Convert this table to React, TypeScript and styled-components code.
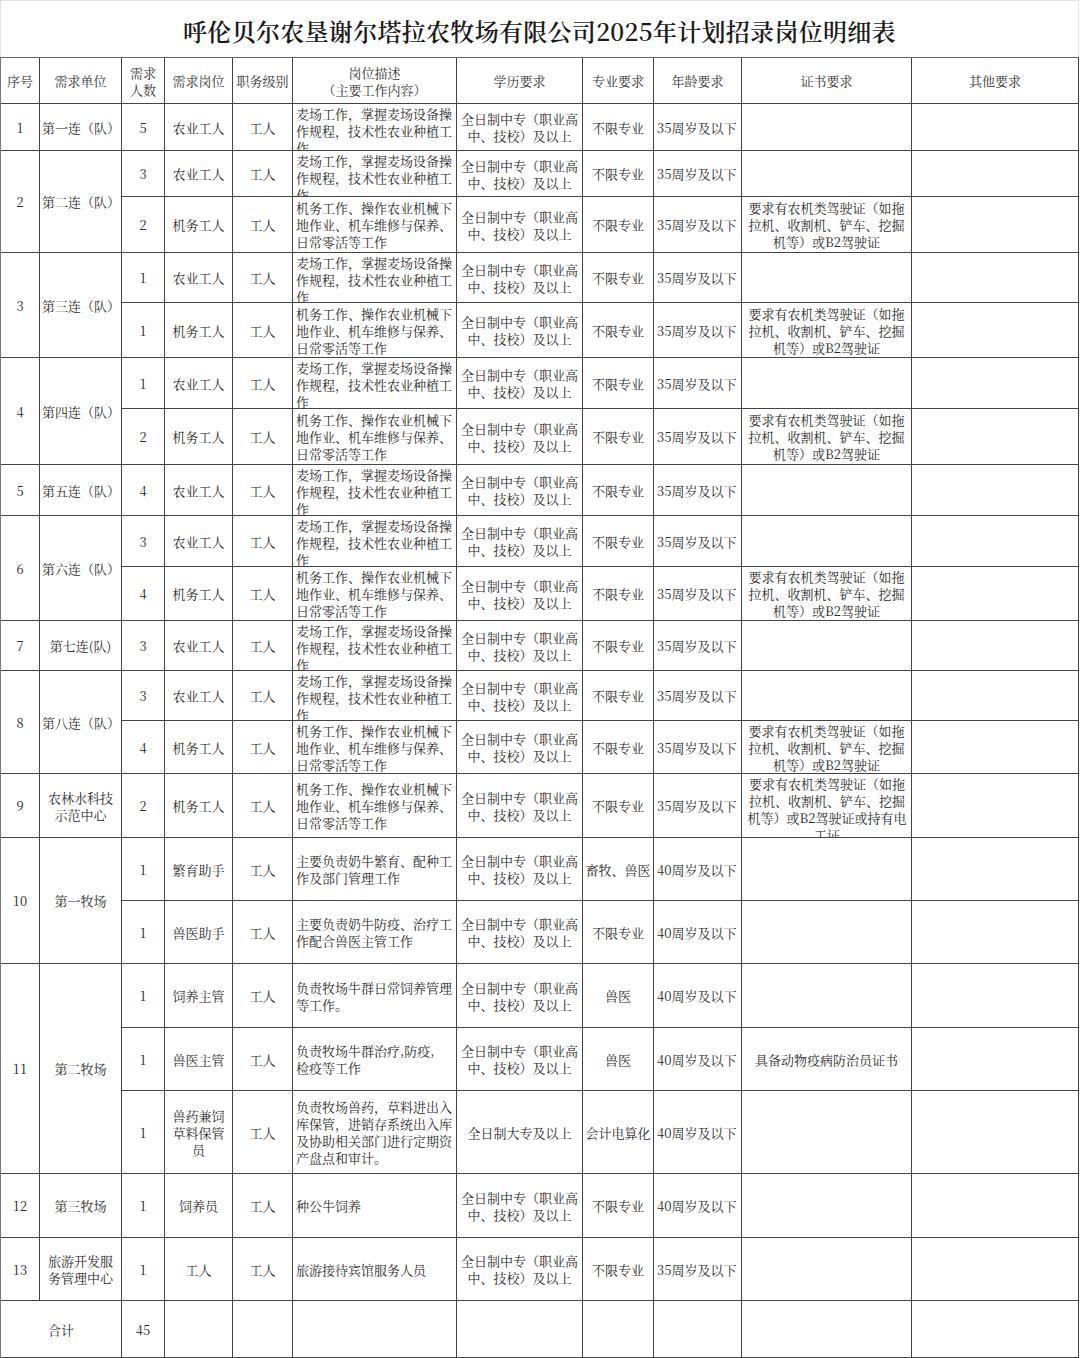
import React from 'react';
import styled, { createGlobalStyle } from 'styled-components';

const Global = createGlobalStyle`
  html, body { margin: 0; padding: 0; background: #fff; }
  body { font-family: "Noto Serif CJK SC", "Liberation Serif", "Noto Sans CJK SC", serif; }
`;

const Page = styled.div`
  width: 1080px;
  background: #fff;
  color: #222;
`;

const Title = styled.div`
  height: 57px;
  box-sizing: border-box;
  width: 1079px;
  border: 1px solid #e2e2e2;
  border-bottom: none;
  display: flex;
  align-items: center;
  justify-content: center;
  font-family: "Noto Serif CJK SC", "Liberation Serif", "Noto Sans CJK SC", serif;
  font-size: 24px;
  font-weight: 600;
  color: #1a1a1a;
  letter-spacing: 0.3px;
  padding-top: 2px;
`;

const Table = styled.div<{ $rows: string }>`
  display: grid;
  grid-template-columns: 39px 82px 43px 68px 60px 164px 126px 71px 88px 170px 167px;
  grid-template-rows: ${(p) => p.$rows};
  border-left: 1px solid #777;
  border-top: 1px solid #666;
  width: 1079px;
  box-sizing: border-box;
`;

const Cell = styled.div<{ $left?: boolean; $top?: boolean; $rowSpan?: number; $colSpan?: number }>`
  box-sizing: border-box;
  display: flex;
  flex-direction: column;
  justify-content: ${(p) => (p.$top ? 'flex-start' : 'center')};
  text-align: ${(p) => (p.$left ? 'left' : 'center')};
  padding: ${(p) => (p.$top ? '1px 2px 0 3px' : '0 2px')};
  ${(p) => (p.$left ? 'padding-left: 3px;' : '')}
  border-right: 1px solid #444;
  border-bottom: 1px solid #444;
  overflow: hidden;
  white-space: pre-line;
  font-size: 13px;
  line-height: 17px;
  color: #2a2a2a;
  grid-row: ${(p) => (p.$rowSpan ? `span ${p.$rowSpan}` : 'auto')};
  grid-column: ${(p) => (p.$colSpan ? `span ${p.$colSpan}` : 'auto')};
`;

const HeadCell = styled(Cell)`
  color: #333;
`;

type Post = {
  n: number;
  post: string;
  desc: string;
  edu?: string;
  major?: string;
  age: string;
  cert?: string;
  h: number;
  descTop?: boolean;
  certTop?: boolean;
};

type Unit = { no: string; unit: string; posts: Post[] };

const FARM_DESC = '麦场工作，掌握麦场设备操\n作规程，技术性农业种植工\n作';
const MECH_DESC = '机务工作、操作农业机械下\n地作业、机车维修与保养、\n日常零活等工作';
const EDU = '全日制中专（职业高\n中、技校）及以上';
const MECH_CERT = '要求有农机类驾驶证（如拖\n拉机、收割机、铲车、挖掘\n机等）或B2驾驶证';

const farm = (n: number, h: number): Post => ({
  n,
  post: '农业工人',
  desc: FARM_DESC,
  major: '不限专业',
  age: '35周岁及以下',
  h,
  descTop: true,
});
const mech = (n: number, h: number): Post => ({
  n,
  post: '机务工人',
  desc: MECH_DESC,
  major: '不限专业',
  age: '35周岁及以下',
  cert: MECH_CERT,
  h,
});

const units: Unit[] = [
  { no: '1', unit: '第一连（队）', posts: [farm(5, 47)] },
  { no: '2', unit: '第二连（队）', posts: [farm(3, 46), mech(2, 56)] },
  { no: '3', unit: '第三连（队）', posts: [farm(1, 50), mech(1, 55)] },
  { no: '4', unit: '第四连（队）', posts: [farm(1, 51), mech(2, 56)] },
  { no: '5', unit: '第五连（队）', posts: [farm(4, 51)] },
  { no: '6', unit: '第六连（队）', posts: [farm(3, 51), mech(4, 54)] },
  { no: '7', unit: '第七连(队)', posts: [farm(3, 50)] },
  { no: '8', unit: '第八连（队）', posts: [farm(3, 50), mech(4, 53)] },
  {
    no: '9',
    unit: '农林水科技\n示范中心',
    posts: [
      {
        ...mech(2, 64),
        cert: '要求有农机类驾驶证（如拖\n拉机、收割机、铲车、挖掘\n机等）或B2驾驶证或持有电\n工证',
        certTop: true,
      },
    ],
  },
  {
    no: '10',
    unit: '第一牧场',
    posts: [
      { n: 1, post: '繁育助手', desc: '主要负责奶牛繁育、配种工\n作及部门管理工作', major: '畜牧、兽医', age: '40周岁及以下', h: 63 },
      { n: 1, post: '兽医助手', desc: '主要负责奶牛防疫、治疗工\n作配合兽医主管工作', major: '不限专业', age: '40周岁及以下', h: 63 },
    ],
  },
  {
    no: '11',
    unit: '第二牧场',
    posts: [
      { n: 1, post: '饲养主管', desc: '负责牧场牛群日常饲养管理\n等工作。', major: '兽医', age: '40周岁及以下', h: 64 },
      {
        n: 1,
        post: '兽医主管',
        desc: '负责牧场牛群治疗,防疫,\n检疫等工作',
        major: '兽医',
        age: '40周岁及以下',
        cert: '具备动物疫病防治员证书',
        h: 63,
      },
      {
        n: 1,
        post: '兽药兼饲\n草料保管\n员',
        desc: '负责牧场兽药，草料进出入\n库保管，进销存系统出入库\n及协助相关部门进行定期资\n产盘点和审计。',
        edu: '全日制大专及以上',
        major: '会计电算化',
        age: '40周岁及以下',
        h: 83,
      },
    ],
  },
  {
    no: '12',
    unit: '第三牧场',
    posts: [{ n: 1, post: '饲养员', desc: '种公牛饲养', major: '不限专业', age: '40周岁及以下', h: 64 }],
  },
  {
    no: '13',
    unit: '旅游开发服\n务管理中心',
    posts: [{ n: 1, post: '工人', desc: '旅游接待宾馆服务人员', major: '不限专业', age: '35周岁及以下', h: 63 }],
  },
];

const headers = [
  '序号',
  '需求单位',
  '需求\n人数',
  '需求岗位',
  '职务级别',
  '岗位描述\n（主要工作内容）',
  '学历要求',
  '专业要求',
  '年龄要求',
  '证书要求',
  '其他要求',
];

export default function App() {
  const heights = [46, ...units.flatMap((u) => u.posts.map((p) => p.h)), 57];
  const rows = heights.map((h) => `${h}px`).join(' ');

  return (
    <Page>
      <Global />
      <Title>呼伦贝尔农垦谢尔塔拉农牧场有限公司2025年计划招录岗位明细表</Title>
      <Table $rows={rows}>
        {headers.map((h) => (
          <HeadCell key={h}>{h}</HeadCell>
        ))}
        {units.map((u) => (
          <React.Fragment key={u.no}>
            <Cell $rowSpan={u.posts.length}>{u.no}</Cell>
            <Cell $rowSpan={u.posts.length}>{u.unit}</Cell>
            {u.posts.map((p, i) => (
              <React.Fragment key={i}>
                <Cell>{p.n}</Cell>
                <Cell>{p.post}</Cell>
                <Cell>工人</Cell>
                <Cell $left $top={p.descTop}>
                  {p.desc}
                </Cell>
                <Cell>{p.edu ?? EDU}</Cell>
                <Cell>{p.major}</Cell>
                <Cell $left>{p.age}</Cell>
                <Cell $top={p.certTop}>{p.cert ?? ''}</Cell>
                <Cell />
              </React.Fragment>
            ))}
          </React.Fragment>
        ))}
        <Cell $colSpan={2}>合计</Cell>
        <Cell>45</Cell>
        <Cell />
        <Cell />
        <Cell />
        <Cell />
        <Cell />
        <Cell />
        <Cell />
        <Cell />
      </Table>
    </Page>
  );
}
